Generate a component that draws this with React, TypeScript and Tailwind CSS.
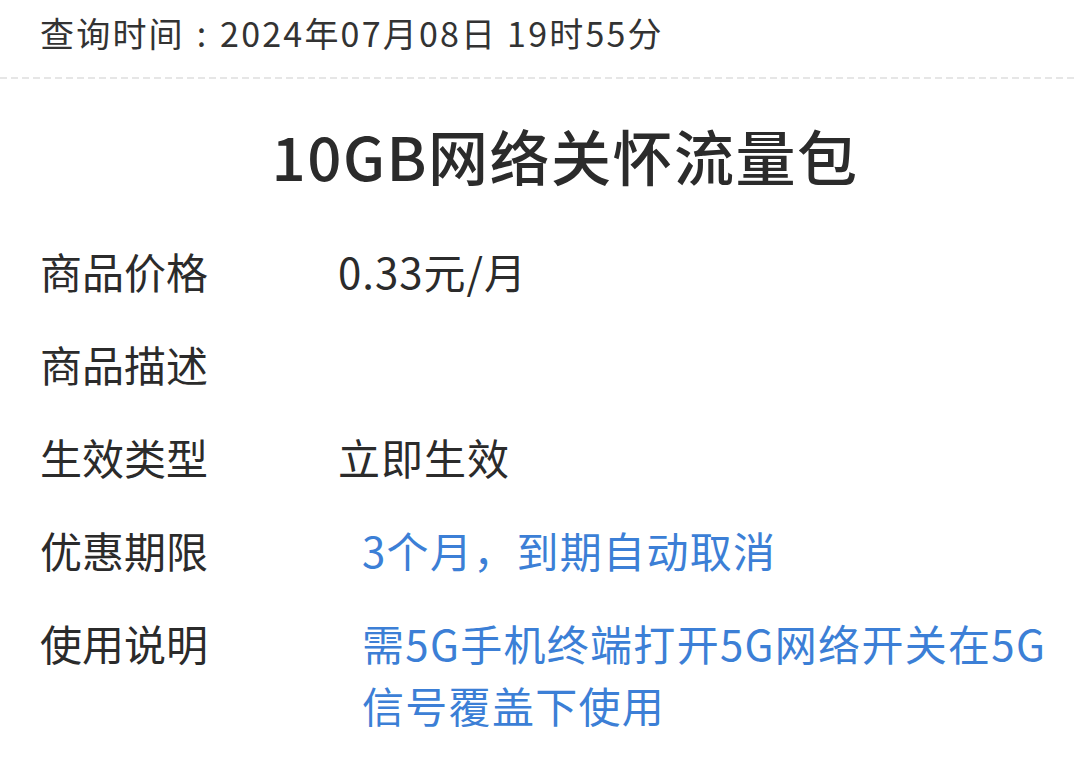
import React from "react";

const font = { fontFamily: '"Noto Sans CJK SC", "Noto Sans", sans-serif' };

function Row({ label, value, blue, lines }: { label: string; value?: string; blue?: boolean; lines?: string[] }) {
  return (
    <div className="flex">
      <div className="w-[298px] shrink-0 text-[42px] leading-[62px] text-[#2b2b2b]">{label}</div>
      {value !== undefined && (
        <div
          className={
            blue
              ? "pl-[24px] w-[740px] text-[42px] leading-[62px] tracking-[1.3px] text-[#3c7fd6]"
              : "text-[42px] leading-[62px] tracking-[1px] text-[#2b2b2b]"
          }
        >
          {lines ? lines.map((l, i) => <div key={i}>{l}</div>) : value}
        </div>
      )}
    </div>
  );
}

export default function App() {
  return (
    <div className="w-[1078px] h-[762px] bg-white overflow-hidden" style={font}>
      <div className="h-[77px] pl-[40px] text-[34px] leading-[66px] tracking-[2.2px] text-[#333333]">
        查询时间 <span className="mx-[2px]">:</span> 2024年07月08日 19时55分
      </div>
      <svg width="1078" height="2" className="block">
        <line x1="0" y1="1" x2="1078" y2="1" stroke="#e6e6e6" strokeWidth="2" strokeDasharray="7 4" />
      </svg>
      <div className="mt-[46px] pl-[52px] text-center text-[60px] leading-[60px] font-medium tracking-[1.5px] text-[#2b2b2b]">
        10GB网络关怀流量包
      </div>
      <div className="mt-[55px] pl-[40px] flex flex-col gap-[31px]">
        <Row label="商品价格" value="0.33元/月" />
        <Row label="商品描述" value="" />
        <Row label="生效类型" value="立即生效" />
        <Row label="优惠期限" value="3个月，到期自动取消" blue />
        <Row label="使用说明" value="x" blue lines={["需5G手机终端打开5G网络开关在5G", "信号覆盖下使用"]} />
      </div>
    </div>
  );
}
